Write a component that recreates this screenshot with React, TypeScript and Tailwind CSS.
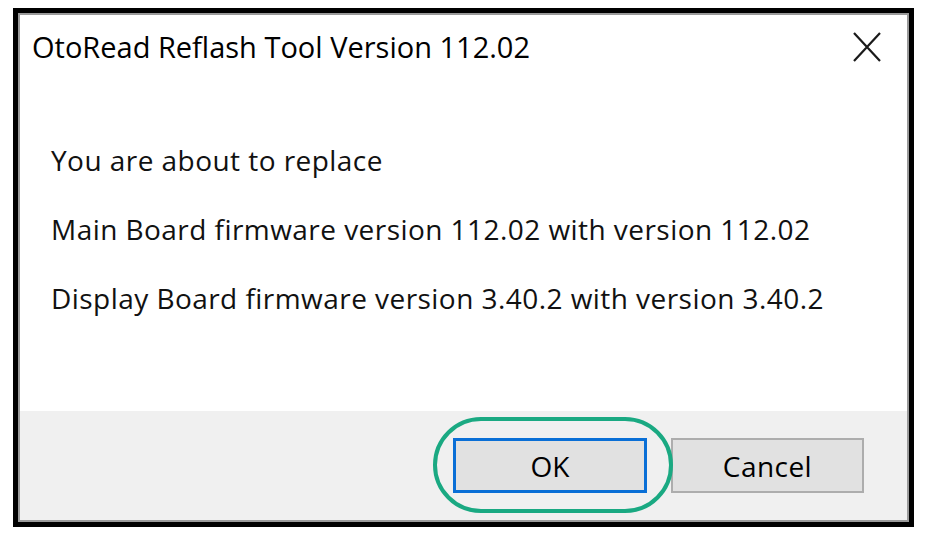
const font = { fontFamily: '"Open Sans", "Noto Sans", sans-serif' };

export default function App() {
  return (
    <div className="w-[932px] h-[538px] bg-white pt-[8px] pl-[13px]" style={font}>
      <div className="w-[901px] h-[519px] border-[5px] border-black bg-black">
        <div className="h-full flex flex-col border-2 border-[#9a9a9a] bg-white">
          {/* title bar */}
          <div className="h-[64px] flex items-center justify-between pl-[12px] pr-[26px]">
            <span className="text-[29px] text-black">OtoRead Reflash Tool Version 112.02</span>
            <svg width="28" height="30" viewBox="0 0 28 30" className="text-[#1a1a1a]">
              <path d="M1 1 L27 29 M27 1 L1 29" stroke="currentColor" strokeWidth="2.2" fill="none" />
            </svg>
          </div>

          {/* message */}
          <div className="flex-1 pl-[31px] pt-[62px] text-[28px] tracking-[0.45px] text-[#111] flex flex-col gap-[31px] leading-[38px]">
            <p>You are about to replace</p>
            <p>Main Board firmware version 112.02 with version 112.02</p>
            <p>Display Board firmware version 3.40.2 with version 3.40.2</p>
          </div>

          {/* buttons */}
          <div className="h-[109px] bg-[#f0f0f0] flex items-start justify-end gap-[24px] pr-[43px] pt-[27px]">
            <div className="relative">
              <div className="absolute -left-[20px] -top-[21px] w-[240px] h-[96px] rounded-full border-4 border-[#1aa982]" />
              <button className="w-[194px] h-[55px] bg-[#e1e1e1] border-[3px] border-[#0a6fd6] text-[28px] text-black">
                OK
              </button>
            </div>
            <button className="w-[193px] h-[55px] bg-[#e1e1e1] border-2 border-[#adadad] text-[28px] tracking-[0.45px] text-black">
              Cancel
            </button>
          </div>
        </div>
      </div>
    </div>
  );
}
